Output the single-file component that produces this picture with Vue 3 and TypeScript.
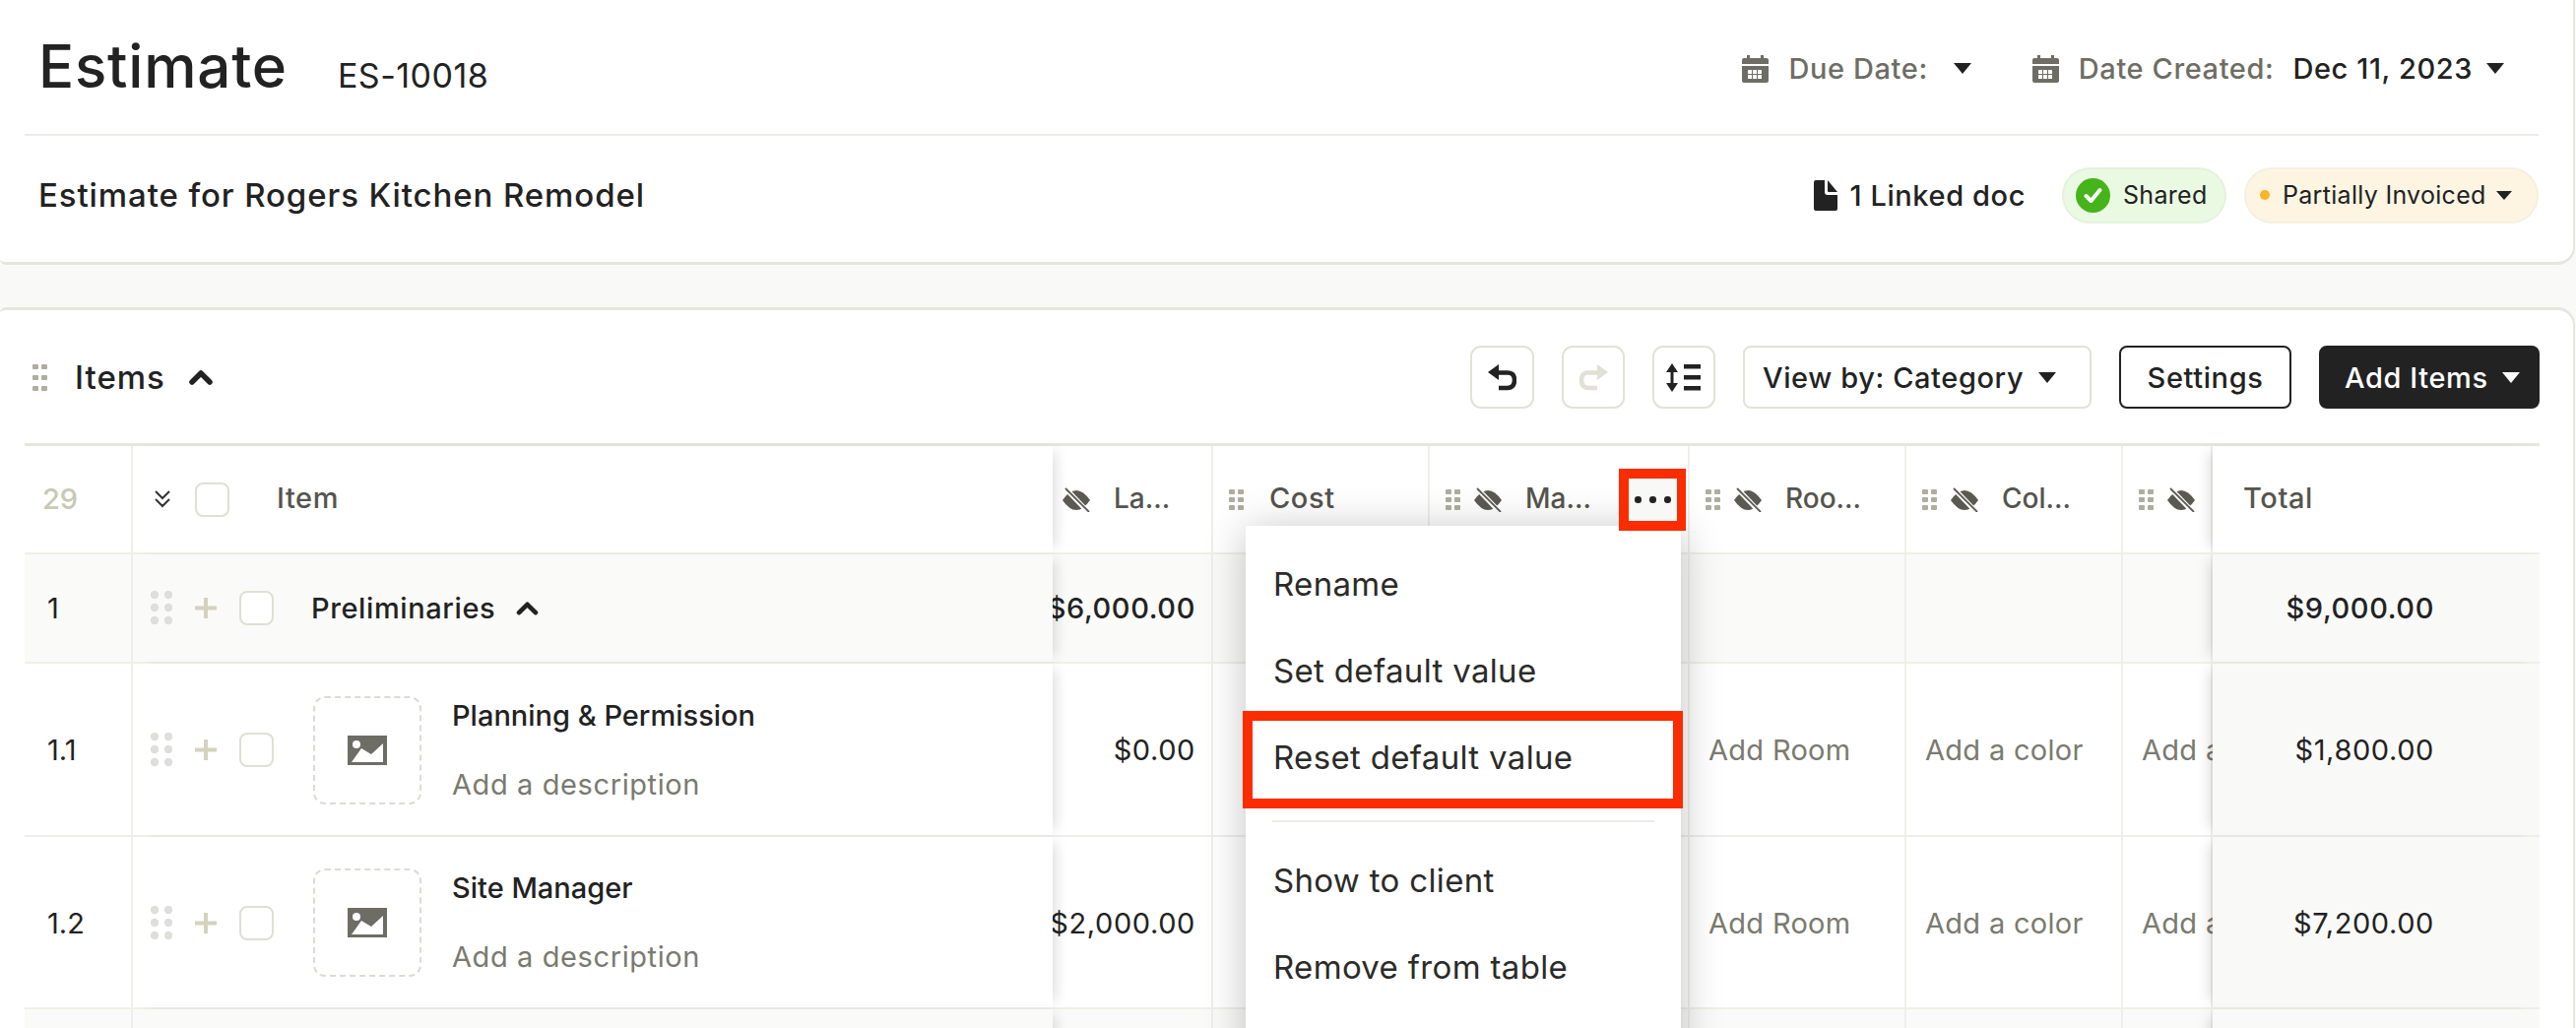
<script setup lang="ts">
const gripCells = [
  [0, 0], [9, 0], [0, 8], [9, 8], [0, 16], [9, 16],
]

const dotCells = [
  [4, 4], [18, 4], [4, 17], [18, 17], [4, 30], [18, 30],
]

const columns = [
  { label: 'La…', grip: false, hidden: true, key: 'labor' },
  { label: 'Cost', grip: true, hidden: false, key: 'cost' },
  { label: 'Ma…', grip: true, hidden: true, key: 'markup' },
  { label: 'Roo…', grip: true, hidden: true, key: 'room' },
  { label: 'Col…', grip: true, hidden: true, key: 'color' },
  { label: '', grip: true, hidden: true, key: 'extra' },
]

const rows = [
  { no: '1', group: true, name: 'Preliminaries', labor: '$6,000.00', total: '$9,000.00' },
  { no: '1.1', group: false, name: 'Planning & Permission', labor: '$0.00', total: '$1,800.00' },
  { no: '1.2', group: false, name: 'Site Manager', labor: '$2,000.00', total: '$7,200.00' },
]
</script>

<template>
  <div class="page">
    <section class="top-card">
      <div class="title-row">
        <div class="title-left">
          <h1 class="title">Estimate</h1>
          <span class="number">ES-10018</span>
        </div>
        <div class="dates">
          <svg class="calendar" viewBox="0 0 27 28">
            <path d="M5 0h3v4H5zM19 0h3v4h-3z" />
            <path d="M2 3h23a2 2 0 0 1 2 2v4H0V5a2 2 0 0 1 2-2z" />
            <path fill-rule="evenodd" d="M0 11h27v15a2 2 0 0 1-2 2H2a2 2 0 0 1-2-2zM6 15v4h4v-4zm5 0v4h4v-4zm5 0v4h4v-4zM6 20v4h4v-4zm5 0v4h4v-4zm5 0v4h4v-4z" />
          </svg>
          <span class="date-label">Due Date:</span>
          <i class="caret due-caret"></i>
          <svg class="calendar second" viewBox="0 0 27 28">
            <path d="M5 0h3v4H5zM19 0h3v4h-3z" />
            <path d="M2 3h23a2 2 0 0 1 2 2v4H0V5a2 2 0 0 1 2-2z" />
            <path fill-rule="evenodd" d="M0 11h27v15a2 2 0 0 1-2 2H2a2 2 0 0 1-2-2zM6 15v4h4v-4zm5 0v4h4v-4zm5 0v4h4v-4zM6 20v4h4v-4zm5 0v4h4v-4zm5 0v4h4v-4z" />
          </svg>
          <span class="date-label">Date Created:</span>
          <span class="date-value">Dec 11, 2023</span>
          <i class="caret"></i>
        </div>
      </div>
      <div class="sub-row">
        <div class="subtitle">Estimate for Rogers Kitchen Remodel</div>
        <div class="badges">
          <svg class="file" viewBox="0 0 24 31">
            <path d="M2 0h9v12a3 3 0 0 0 3 3h10v14a2 2 0 0 1-2 2H2a2 2 0 0 1-2-2V2a2 2 0 0 1 2-2z" />
            <path d="M14 0l10 12h-9a1 1 0 0 1-1-1z" />
          </svg>
          <span class="linked">1 Linked doc</span>
          <span class="pill shared">
            <svg class="check" viewBox="0 0 35 35">
              <circle cx="17.5" cy="17.5" r="17.5" fill="#45b41b" />
              <path d="M10.5 18l5 5 9-11" fill="none" stroke="#fff" stroke-width="4" stroke-linecap="round" stroke-linejoin="round" />
            </svg>
            Shared
          </span>
          <span class="pill invoiced">
            <i class="dot"></i>
            Partially Invoiced
            <i class="caret small"></i>
          </span>
        </div>
      </div>
    </section>

    <section class="items-card">
      <div class="toolbar">
        <div class="toolbar-left">
          <svg class="grip big" viewBox="0 0 15 27">
            <rect v-for="(c, i) in [[0,0],[9,0],[0,11],[9,11],[0,22],[9,22]]" :key="i" :x="c[0]" :y="c[1]" width="6" height="5" rx="1" />
          </svg>
          <span class="items-label">Items</span>
          <svg class="chevron" viewBox="0 0 24 15">
            <path d="M3 12l9-9 9 9" fill="none" stroke="#222" stroke-width="5.500" stroke-linecap="round" stroke-linejoin="round" />
          </svg>
        </div>
        <div class="toolbar-right">
          <button class="tool first">
            <svg width="29" height="27" viewBox="0 0 29 27">
              <path d="M0 8L11 0v16z" fill="#222" />
              <path d="M9 8.5h11q7 0 7 7.5t-7 8h-9" fill="none" stroke="#222" stroke-width="4.5" />
            </svg>
          </button>
          <button class="tool">
            <svg width="29" height="27" viewBox="0 0 29 27">
              <path d="M29 8L18 0v16z" fill="#e0e0d6" />
              <path d="M20 8.5H9q-7 0-7 7.5t7 8h9" fill="none" stroke="#e0e0d6" stroke-width="4.5" />
            </svg>
          </button>
          <button class="tool">
            <svg width="36" height="29" viewBox="0 0 36 29">
              <path d="M6 0l6 9H7.500v11H12l-6 9-6-9h4.500V9H0z" fill="#222" />
              <path d="M18 1h17v4.500H18zM18 12h17v4.500H18zM18 23h17v4.500H18z" fill="#222" />
            </svg>
          </button>
          <button class="select">View by: Category <i class="caret"></i></button>
          <button class="settings">Settings</button>
          <button class="add">Add Items <i class="caret light"></i></button>
        </div>
      </div>

      <div class="table">
        <div class="grid-row head-row">
          <div class="cell no-cell count">29</div>
          <div class="cell item-cell head-item">
            <svg class="double" viewBox="0 0 18 18">
              <path d="M2 1l7 7 7-7M2 9l7 7 7-7" fill="none" stroke="#333" stroke-width="2" />
            </svg>
            <span class="box head-box"></span>
            <span class="head-title">Item</span>
          </div>
          <div
            v-for="col in columns"
            :key="col.key"
            class="cell head-cell"
            :class="'head-' + col.key"
          >
            <svg v-if="col.grip" class="grip" viewBox="0 0 15 21">
              <rect v-for="(c, i) in gripCells" :key="i" :x="c[0]" :y="c[1]" width="6" height="5" rx="1" />
            </svg>
            <svg v-if="col.hidden" class="eye" viewBox="0 0 28 25">
              <path d="M0 13Q7 3 14 3t14 10q-7 10-14 10T0 13z" fill="#5a5952" />
              <path d="M2 0l24 25" stroke="#fff" stroke-width="5" />
              <path d="M3 1l24 24" stroke="#5a5952" stroke-width="1.800" />
            </svg>
            <span v-if="col.label" class="head-label">{{ col.label }}</span>
            <template v-if="col.key === 'markup'">
              <div class="menu">
                <div class="menu-item">Rename</div>
                <div class="menu-item">Set default value</div>
                <div class="menu-item marked">Reset default value</div>
                <div class="menu-line"></div>
                <div class="menu-item">Show to client</div>
                <div class="menu-item">Remove from table</div>
              </div>
              <div class="more"><i></i><i></i><i></i></div>
            </template>
          </div>
          <div class="cell total-cell head-total"><span class="head-title">Total</span></div>
        </div>

        <div
          v-for="row in rows"
          :key="row.no"
          class="grid-row"
          :class="row.group ? 'group-row' : 'item-row'"
        >
          <div class="cell no-cell">{{ row.no }}</div>
          <div class="cell item-cell">
            <svg class="dots" viewBox="0 0 22 35">
              <circle v-for="(c, i) in dotCells" :key="i" :cx="c[0]" :cy="c[1]" r="4.200" />
            </svg>
            <svg class="plus" viewBox="0 0 22 21">
              <path d="M9 0h4v8.500h9v4h-9V21H9v-8.500H0v-4h9z" />
            </svg>
            <span class="box"></span>
            <template v-if="row.group">
              <span class="group-name">{{ row.name }}</span>
              <svg class="chevron group-chevron" viewBox="0 0 24 15">
                <path d="M3 12l9-9 9 9" fill="none" stroke="#222" stroke-width="5" stroke-linecap="round" stroke-linejoin="round" />
              </svg>
            </template>
            <template v-else>
              <div class="thumb">
                <svg viewBox="0 0 40 30">
                  <path d="M0 0h40v30H0z" fill="#6e6d65" />
                  <circle cx="9" cy="9" r="4" fill="#fff" />
                  <path d="M4 27l10-14 10 6 12-11v19z" fill="#fff" />
                </svg>
              </div>
              <div class="item-text">
                <div class="item-name">{{ row.name }}</div>
                <div class="placeholder">Add a description</div>
              </div>
            </template>
          </div>
          <div class="cell money">{{ row.labor }}</div>
          <div class="cell"></div>
          <div class="cell"></div>
          <div class="cell placeholder pad"><template v-if="!row.group">Add Room</template></div>
          <div class="cell placeholder pad"><template v-if="!row.group">Add a color</template></div>
          <div class="cell placeholder pad"><template v-if="!row.group">Add a color</template></div>
          <div class="cell total-cell money-total">{{ row.total }}</div>
        </div>

        <div class="grid-row group-row">
          <div class="cell no-cell"></div>
          <div class="cell item-cell"></div>
          <div class="cell"></div>
          <div class="cell"></div>
          <div class="cell"></div>
          <div class="cell"></div>
          <div class="cell"></div>
          <div class="cell"></div>
          <div class="cell total-cell"></div>
        </div>
      </div>
    </section>
  </div>
</template>

<style>
html,
body {
  margin: 0;
  background: #f9f9f7;
  overflow: hidden;
}
</style>

<style scoped>
.page {
  width: 2616px;
  height: 1044px;
  overflow: hidden;
  background: #f9f9f7;
  color: #222;
  font-family: Inter, "Open Sans", sans-serif;
  font-size: 29px;
  letter-spacing: 0.6px;
}

.top-card {
  box-sizing: border-box;
  width: 2615px;
  height: 269px;
  background: #fff;
  border: solid #e6e6df;
  border-width: 0 2px 3px 0;
  border-radius: 0 0 18px 6px;
}

.title-row,
.sub-row {
  display: flex;
  justify-content: space-between;
  margin: 0 35px 0 25px;
  padding-left: 14px;
}

.title-row {
  box-sizing: border-box;
  height: 138px;
  border-bottom: 2px solid #ecece7;
  padding-right: 35px;
}

.title-left {
  display: flex;
  align-items: baseline;
  gap: 51px;
  padding-top: 31px;
}

.title {
  margin: 0;
  font-size: 60px;
  line-height: 72px;
  font-weight: 500;
  letter-spacing: 0.8px;
}

.number {
  font-size: 34px;
  letter-spacing: 0.5px;
}

.dates {
  display: flex;
  align-items: center;
  height: 130px;
  padding-top: 9px;
  box-sizing: border-box;
}

.calendar {
  width: 27px;
  height: 28px;
  fill: #6e6d65;
  margin-right: 20px;
}

.calendar.second {
  margin-left: 62px;
}

.date-label {
  color: #6e6d65;
  font-weight: 500;
}

.date-value {
  margin: 0 14px 0 19px;
  font-weight: 500;
}

.due-caret {
  margin-left: 26px;
}

.caret {
  display: inline-block;
  width: 0;
  height: 0;
  border-left: 9px solid transparent;
  border-right: 9px solid transparent;
  border-top: 11px solid #222;
}

.caret.small {
  border-left-width: 8px;
  border-right-width: 8px;
  border-top-width: 9px;
  margin-left: 10px;
}

.caret.light {
  border-top-color: #fff;
  margin-left: 14px;
}

.sub-row {
  align-items: center;
  height: 120px;
  padding-left: 14px;
  margin-right: 35px;
}

.subtitle {
  font-size: 33px;
  font-weight: 500;
  letter-spacing: 0.9px;
}

.badges {
  display: flex;
  align-items: center;
}

.file {
  width: 24px;
  height: 31px;
  fill: #222;
  margin-right: 12px;
}

.linked {
  font-weight: 500;
  margin-right: 37px;
}

.pill {
  box-sizing: border-box;
  display: flex;
  align-items: center;
  height: 57px;
  border-radius: 29px;
  font-size: 25px;
  letter-spacing: 0.3px;
  border: 2px solid;
}

.shared {
  width: 167px;
  padding-left: 12px;
  background: #e9f9e2;
  border-color: #e3f3dc;
  margin-right: 18px;
}

.check {
  width: 35px;
  height: 35px;
  margin-right: 13px;
}

.invoiced {
  width: 299px;
  padding-left: 14px;
  background: #fdf5e2;
  border-color: #f6efdf;
}

.dot {
  width: 10px;
  height: 10px;
  border-radius: 50%;
  background: #fbb429;
  margin-right: 13px;
}

.items-card {
  box-sizing: border-box;
  width: 2615px;
  height: 740px;
  margin-top: 43px;
  background: #fff;
  border: solid #e6e6df;
  border-width: 3px 2px 0 0;
  border-radius: 6px 18px 0 0;
}

.toolbar {
  box-sizing: border-box;
  display: flex;
  justify-content: space-between;
  height: 135px;
  padding: 36px 34px 0 33px;
}

.toolbar-left {
  display: flex;
  align-items: center;
  height: 64px;
}

.grip {
  width: 15px;
  height: 21px;
  flex: none;
  fill: #aeae9f;
}

.grip.big {
  height: 27px;
}

.items-label {
  margin: 0 24px 0 28px;
  font-size: 33px;
  font-weight: 500;
  letter-spacing: 1px;
}

.chevron {
  width: 24px;
  height: 15px;
}

.toolbar-right {
  display: flex;
  gap: 28px;
}

.toolbar-right button {
  box-sizing: border-box;
  display: flex;
  align-items: center;
  justify-content: center;
  height: 64px;
  padding: 0;
  background: #fff;
  border: 2px solid #e2e2d8;
  border-radius: 8px;
  color: #222;
  font: 500 29px Inter, "Open Sans", sans-serif;
  letter-spacing: 0.6px;
}

.toolbar-right button.tool {
  width: 64px;
  border-radius: 11px;
}

.toolbar-right button.first {
  width: 65px;
}

.toolbar-right button.select {
  width: 354px;
  gap: 15px;
  justify-content: flex-start;
  padding-left: 18px;
}

.toolbar-right button.settings {
  width: 175px;
  border-color: #222;
}

.toolbar-right button.add {
  width: 224px;
  justify-content: flex-start;
  padding-left: 24px;
  background: #222;
  border-color: #222;
  color: #fff;
}

.table {
  width: 2554px;
  margin-left: 25px;
  border-top: 3px solid #e6e6df;
}

.grid-row {
  display: grid;
  grid-template-columns: 110px 934px 163px 220px 264px 220px 220px 91px 332px;
  box-sizing: border-box;
  background: #fff;
  border-bottom: 2px solid #efefea;
}

.group-row {
  height: 111px;
  background: #fafaf8;
}

.item-row {
  height: 175.5px;
}

.item-row .cell {
  padding-top: 2px;
}

.head-row {
  position: relative;
  z-index: 5;
  height: 110px;
  background: #fff;
}

.cell {
  box-sizing: border-box;
  display: flex;
  align-items: center;
  min-width: 0;
  white-space: nowrap;
  border-right: 2px solid #efefea;
}

.no-cell {
  padding-left: 23px;
  letter-spacing: 0;
}

.count {
  padding-left: 18px;
  padding-bottom: 2px;
  color: #c9c9b4;
  font-weight: 500;
}

.item-cell {
  position: relative;
  z-index: 2;
  padding-left: 18px;
  background: inherit;
  border-right: 0;
  box-shadow: 10px 0 12px -6px rgba(0, 0, 0, 0.12);
}

.head-item {
  padding-left: 21px;
}

.double {
  width: 18px;
  height: 18px;
  margin-right: 24px;
}

.box {
  box-sizing: border-box;
  flex: none;
  width: 35px;
  height: 35px;
  background: #fff;
  border: 2px solid #dfdfd6;
  border-radius: 8px;
}

.head-box {
  margin-right: 48px;
}

.head-title,
.head-label {
  margin-bottom: 3px;
  color: #55544e;
  font-weight: 500;
}

.head-label {
  font-size: 28px;
  letter-spacing: 0;
}

.head-cost .head-label {
  font-size: 29px;
  letter-spacing: 0.6px;
}

.dots {
  width: 22px;
  height: 35px;
  fill: #dededa;
  margin-right: 23px;
}

.plus {
  width: 22px;
  height: 21px;
  fill: #d4d2bd;
  margin-right: 23px;
}

.group-name {
  margin: 0 21px 0 38px;
  font-weight: 500;
}

.group-chevron {
  width: 23px;
  height: 14px;
}

.thumb {
  box-sizing: border-box;
  display: flex;
  align-items: center;
  justify-content: center;
  width: 110px;
  height: 110px;
  margin: 0 31px 0 40px;
  border: 2px dashed #dcdcd4;
  border-radius: 12px;
}

.thumb svg {
  width: 40px;
  height: 30px;
}

.item-text {
  line-height: 70px;
}

.item-name {
  font-weight: 500;
  letter-spacing: 0;
}

.placeholder {
  color: #7a7a70;
  font-size: 29px;
}

.money {
  justify-content: flex-end;
  padding-right: 16px;
}

.group-row .money,
.group-row .money-total {
  font-weight: 500;
}

.pad {
  padding-left: 19px;
  letter-spacing: 0.3px;
}

.total-cell {
  position: relative;
  z-index: 2;
  background: #f9f9f7;
  border-right: 0;
  box-shadow: -10px 0 12px -6px rgba(0, 0, 0, 0.12);
}

.head-total {
  padding-left: 31px;
  background: #fff;
}

.money-total {
  justify-content: flex-end;
  padding-right: 107px;
}

.head-cell {
  position: relative;
  padding-left: 16px;
}

.head-cell .grip {
  margin-right: 14px;
}

.head-labor {
  padding-left: 10px;
}

.head-cost .grip {
  margin-right: 26px;
}

.eye {
  flex: none;
  width: 28px;
  height: 25px;
  margin-right: 24px;
}

.menu {
  position: absolute;
  z-index: 1;
  top: 81px;
  left: -187px;
  box-sizing: border-box;
  width: 442px;
  height: 640px;
  padding-top: 15px;
  background: #fff;
  box-shadow: 0 4px 40px rgba(0, 0, 0, 0.24);
}

.menu-item {
  position: relative;
  height: 88px;
  line-height: 88px;
  padding-left: 28px;
  font-size: 33px;
  letter-spacing: 0.33px;
  color: #2b2b28;
}

.marked::after {
  content: "";
  position: absolute;
  inset: -3px -2px -8px -3px;
  border: 10px solid #fa2c00;
}

.menu-line {
  height: 2px;
  margin: 20px 27px 15px 27px;
  background: #ecece7;
}

.more {
  position: absolute;
  z-index: 2;
  top: 23px;
  left: 192px;
  box-sizing: border-box;
  display: flex;
  align-items: center;
  justify-content: center;
  gap: 8.500px;
  width: 68px;
  height: 63px;
  background: #f8f8f6;
  border: 10px solid #fa2c00;
  border-right-width: 9px;
}

.more i {
  width: 6.500px;
  height: 6.500px;
  border-radius: 50%;
  background: #222;
}
</style>
